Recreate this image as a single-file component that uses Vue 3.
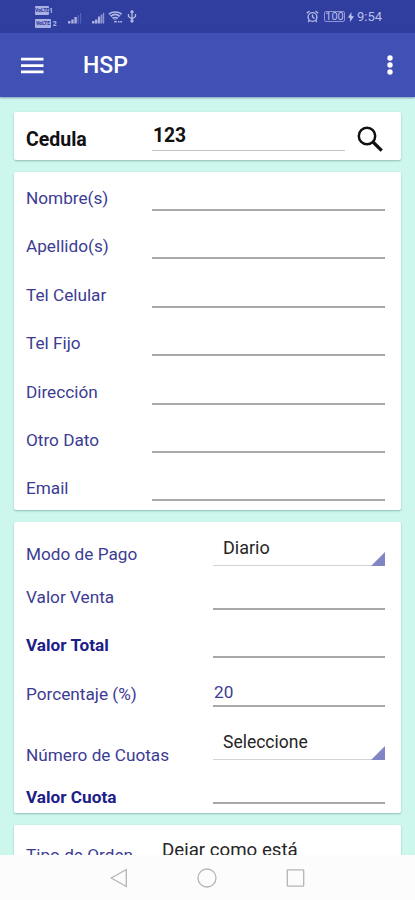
<template>
    <div class="screen">
        <div class="status">
            <div class="volte">
                <span><b>VoLTE</b>1</span>
                <span class="second"><b>VoLTE</b> 2</span>
            </div>
            <svg class="sig1" width="14" height="12" viewBox="0 0 14 12">
                <path d="M0 9h2.500v2.500H0zM3.300 7.500h2.400v4H3.300zM6.400 5h2.400v6.500H6.400z" fill="#aab0e2" />
                <path d="M9.500 3h1.400v8.500H9.500zM12 1h1.200v10.500H12z" fill="#5560b8" />
            </svg>
            <svg class="sig2" width="13" height="12" viewBox="0 0 13 12">
                <path d="M0 9h2.500v2.500H0zM3 7.500h2.400v4H3zM5.900 4.500h2.400v7H5.900z" fill="#aab0e2" />
                <path d="M8.700 2.500h1.800v9H8.700zM10.900 .800h1.300v10.700h-1.300z" fill="#8d95d4" />
            </svg>
            <svg class="wifi" width="15" height="12" viewBox="0 0 15 12" fill="none" stroke="#b3b9e6" stroke-width="1.500">
                <path d="M.800 3C4.500 .200 10 .200 13.700 3M2.800 5.200c2.700-2.200 6.200-2.200 8.900 0M4.800 7.500c1.600-1.300 3.300-1.300 4.900 0" />
                <path d="M1.200 3 7 9.300 13.300 3" stroke-width=".700" />
                <path d="M6.300 10.700h2.500M10 10.700h1.500M12.300 10.700h1.700" />
            </svg>
            <svg class="usb" width="10" height="13" viewBox="0 0 10 13" fill="none" stroke="#b3b9e6" stroke-width="1.300">
                <path d="M5 1v11M1.500 4v2.500L5 9M8.500 4v2.500L5 9M3.500 2.500 5 .700l1.500 1.800" />
                <circle cx="5" cy="11" r="1" />
            </svg>
            <svg class="alarm" width="13" height="13" viewBox="0 0 13 13" fill="none" stroke="#b3b9e6" stroke-width="1.400">
                <circle cx="6.500" cy="7" r="4.400" />
                <path d="M.800 3.300 3.500 1M12.200 3.300 9.500 1M6.500 4.500V7l2 1.500M3.500 10.300 2.200 12M9.500 10.300l1.300 1.700" />
            </svg>
            <span class="battery">100</span>
            <svg class="bolt" width="6" height="10" viewBox="0 0 6 10">
                <path d="M3.300 0 0 5.800h2.200L2 10 6 4.200H3.500z" fill="#c0c5ec" />
            </svg>
            <span class="clock">9:54</span>
        </div>

        <div class="bar">
            <svg class="burger" width="23" height="17" viewBox="0 0 23 17">
                <path d="M0 .700h22.500v2.800H0zM0 7.200h22.500V10H0zM0 13.500h22.500v2.800H0z" fill="#fff" />
            </svg>
            <h1>HSP</h1>
            <svg class="dots" width="6" height="20" viewBox="0 0 6 20" fill="#fff">
                <circle cx="3" cy="3" r="2.700" />
                <circle cx="3" cy="10" r="2.700" />
                <circle cx="3" cy="17" r="2.700" />
            </svg>
        </div>

        <div class="content">
            <div class="card search">
                <label>Cedula</label>
                <div class="cedula">123</div>
                <svg width="27" height="27" viewBox="0 0 27 27" fill="none" stroke="#111">
                    <circle cx="10" cy="10" r="8.200" stroke-width="2.500" />
                    <path d="m16 16 8.700 8.700" stroke-width="3.300" />
                </svg>
            </div>

            <div class="card person">
                <div class="row" v-for="name in person" :key="name">
                    <label>{{ name }}</label>
                    <div class="input"></div>
                </div>
            </div>

            <div class="card sale">
                <div class="row" v-for="f in sale" :key="f.label" :class="f.row">
                    <label :class="{ strong: f.strong }">{{ f.label }}</label>
                    <div v-if="f.select" class="select">{{ f.value }}</div>
                    <div v-else class="input">{{ f.value }}</div>
                </div>
            </div>

            <div class="card order">
                <label>Tipo de Orden</label>
                <div class="select">Dejar como está</div>
            </div>
        </div>

        <div class="nav">
            <svg width="18" height="20" viewBox="0 0 18 20">
                <path d="M16.300 1.500v17L1.300 10z" />
            </svg>
            <svg width="20" height="20" viewBox="0 0 20 20">
                <circle cx="10" cy="10" r="9" />
            </svg>
            <svg width="19" height="20" viewBox="0 0 19 20">
                <rect x="1.300" y="1.800" width="16.400" height="16.400" rx=".800" />
            </svg>
        </div>
    </div>
</template>

<script setup>
const person = ['Nombre(s)', 'Apellido(s)', 'Tel Celular', 'Tel Fijo', 'Dirección', 'Otro Dato', 'Email'];

const sale = [
    { label: 'Modo de Pago', value: 'Diario', select: true, row: 'mode' },
    { label: 'Valor Venta', value: '', row: 'venta' },
    { label: 'Valor Total', value: '', strong: true, row: 'total' },
    { label: 'Porcentaje (%)', value: '20', row: 'percent' },
    { label: 'Número de Cuotas', value: 'Seleccione', select: true, row: 'cuotas' },
    { label: 'Valor Cuota', value: '', strong: true, row: 'cuota' },
];
</script>

<style>
body {
    margin: 0;
}
</style>

<style scoped>
* {
    box-sizing: border-box;
}

.screen {
    width: 415px;
    height: 900px;
    display: flex;
    flex-direction: column;
    overflow: hidden;
    background: #cdf7ec;
    font-family: Roboto, "Liberation Sans", sans-serif;
    font-size: 17.200px;
    line-height: 20px;
}

svg {
    display: block;
    flex: none;
}

/* STATUS BAR */
.status {
    height: 33px;
    flex: none;
    display: flex;
    align-items: center;
    padding-left: 35px;
    background: #303e9f;
    color: #b9bfea;
}

.volte {
    width: 25px;
    display: flex;
    flex-direction: column;
    gap: 4px;
}

.volte span {
    display: flex;
    align-items: flex-end;
    height: 9px;
    font-size: 7px;
    font-weight: 700;
    line-height: 8px;
    white-space: pre;
}

.volte b {
    width: 14px;
    height: 9px;
    line-height: 9px;
    font-size: 5px;
    text-align: center;
    border-radius: 1px;
    background: #aab0e2;
    color: #303e9f;
}

.volte .second b {
    width: 16px;
}

.sig1 {
    margin: 2px 0 0 8px;
}

.sig2 {
    margin: 2px 0 0 10px;
}

.wifi {
    margin-left: 3px;
}

.usb {
    margin-left: 4px;
}

.alarm {
    margin-left: 169px;
}

.battery {
    width: 21px;
    height: 11px;
    margin-left: 5px;
    border: 1px solid #8d95d4;
    border-radius: 2px;
    font-size: 11px;
    line-height: 10px;
    text-align: center;
}

.bolt {
    margin: 0 3px 0 3px;
}

.clock {
    font-size: 13px;
    line-height: 16px;
}

/* APP BAR */
.bar {
    height: 64px;
    flex: none;
    display: flex;
    align-items: center;
    padding: 0 22px 0 21px;
    background: #4150b5;
    box-shadow: 0 1px 2px rgba(40, 60, 140, .5);
    color: #fff;
}

.bar h1 {
    flex: 1;
    margin: 2px 0 0 39px;
    font-size: 23px;
    font-weight: 500;
    line-height: 28px;
}

/* CARDS */
.content {
    flex: 1;
    min-height: 0;
    overflow: hidden;
    display: flex;
    flex-direction: column;
    gap: 12px;
    padding: 15px 14px 0;
}

.card {
    flex: none;
    padding: 0 16px 0 12px;
    border-radius: 2px;
    background: #fff;
    box-shadow: 0 1px 2px rgba(0, 60, 50, .3);
}

label {
    color: #3c3c93;
    white-space: nowrap;
}

.strong {
    font-weight: 700;
    color: #1c2089;
}

.search {
    height: 48px;
    display: flex;
    align-items: flex-start;
}

.search label {
    width: 126px;
    padding-top: 18px;
    font-size: 19.500px;
    font-weight: 700;
    color: #111;
}

.cedula {
    width: 193px;
    height: 39px;
    padding: 14px 0 0 1px;
    border-bottom: 1px solid #c4c4c4;
    font-size: 19.300px;
    font-weight: 700;
    color: #111;
}

.search svg {
    margin: 14px 0 0 12px;
}

.row {
    display: flex;
}

.input {
    flex: 1;
    border-bottom: 2px solid #a8a8a8;
    color: #3c3c93;
}

.person {
    height: 338px;
}

.person .row {
    height: 48.400px;
    align-items: flex-start;
}

.person label {
    width: 126px;
    padding-top: 16px;
}

.person .input {
    height: 39px;
}

.sale {
    height: 291px;
}

.sale label {
    width: 187px;
}

.select {
    flex: 1;
    display: flex;
    justify-content: space-between;
    padding-left: 10px;
    border-bottom: 1px solid #d3d3d3;
    font-size: 17.500px;
    color: #262626;
}

/* dropdown corner */
.select::after {
    content: "";
    width: 14px;
    height: 14px;
    align-self: flex-end;
    margin-bottom: -1px;
    background: #8285c4;
    clip-path: polygon(100% 0, 100% 100%, 0 100%);
}

.mode {
    height: 44px;
}

.mode label {
    padding-top: 22px;
}

.mode .select {
    padding-top: 16px;
    font-size: 18px;
}

.venta {
    height: 44px;
}

.venta label {
    padding-top: 21px;
}

.total {
    height: 48px;
}

.total label {
    padding-top: 25px;
}

.percent {
    height: 49px;
}

.percent label {
    padding-top: 26px;
}

.percent .input {
    padding: 24px 0 0 1px;
}

.cuotas {
    height: 53px;
}

.cuotas label {
    padding-top: 38px;
}

.cuotas .select {
    padding-top: 25px;
}

.cuota {
    height: 44px;
}

.cuota label {
    padding-top: 27px;
}

.order {
    height: 60px;
    display: flex;
}

.order label {
    width: 126px;
    padding-top: 20px;
}

.order .select {
    padding-top: 15px;
    font-size: 18.700px;
}

/* NAVIGATION */
.nav {
    height: 45px;
    flex: none;
    display: flex;
    justify-content: center;
    align-items: center;
    gap: 69px;
    background: #fcfcfc;
}

.nav path,
.nav circle,
.nav rect {
    fill: none;
    stroke: #b4b4b4;
    stroke-width: 1.300;
}
</style>
